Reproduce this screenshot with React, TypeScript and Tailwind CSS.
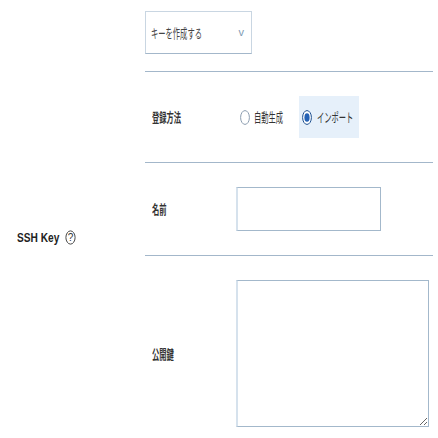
import React from "react";

const FONT = { fontFamily: '"Liberation Sans", "Noto Sans CJK JP", sans-serif' };

function Sq({ w, className, children }: { w: string; className?: string; children: React.ReactNode }) {
  return (
    <span className={`inline-block overflow-visible whitespace-nowrap ${w}`}>
      <span className={`inline-block origin-left scale-x-[0.56] whitespace-nowrap text-[13px] leading-[16px] ${className ?? ""}`}>
        {children}
      </span>
    </span>
  );
}

function Radio({ checked }: { checked: boolean }) {
  return (
    <svg width="10" height="15" viewBox="0 0 10 15" className="shrink-0">
      <ellipse cx="5" cy="7.5" rx="4.4" ry="6.9" fill="#fff" stroke={checked ? "#1c4f8f" : "#8c9db0"} strokeWidth="1" />
      {checked && <ellipse cx="5" cy="7.5" rx="2.6" ry="4.3" fill="#2562b5" />}
    </svg>
  );
}

export default function App() {
  return (
    <div className="flex w-[438px] h-[474px] bg-white text-[#333]" style={FONT}>
      <div className="w-[145px] shrink-0 flex items-center pl-[17px]">
        <span className="inline-block w-[47px] whitespace-nowrap">
          <span className="inline-block origin-left scale-x-[0.78] text-[13px] font-bold leading-[14px] text-[#222]">SSH Key</span>
        </span>
        <svg width="11" height="15" viewBox="0 0 11 15" className="ml-[1px]">
          <ellipse cx="5.5" cy="7.5" rx="4.6" ry="6.6" fill="none" stroke="#333" strokeWidth="0.9" />
          <text x="5.5" y="11" textAnchor="middle" fontSize="10" fill="#333" fontFamily="Liberation Sans, sans-serif">?</text>
        </svg>
      </div>
      <div className="flex-1 pr-[5px] flex flex-col">
        <div className="h-[72px] border-b border-[#a3b7ca] pt-[11px]">
          <div className="w-[107px] h-[43px] border border-[#c9d6e2] border-b-[#a3b7ca] flex items-center pl-[5px] pr-[7px] justify-between">
            <Sq w="w-[50px]" className="text-[#444]">キーを作成する</Sq>
            <span className="text-[11px] text-[#7f9ab3] leading-none">v</span>
          </div>
        </div>
        <div className="h-[91px] border-b border-[#a3b7ca] flex items-center">
          <div className="w-[91px] pl-[7px]">
            <Sq w="w-[30px]" className="font-semibold text-[#333]">登録方法</Sq>
          </div>
          <div className="flex items-center pl-[4px]">
            <Radio checked={false} />
            <span className="ml-[4px]">
              <Sq w="w-[30px]" className="text-[#333]">自動生成</Sq>
            </span>
            <div className="ml-[15px] h-[42px] w-[60px] bg-[#e6f0fa] flex items-center pl-[3px]">
              <Radio checked={true} />
              <span className="ml-[5px]">
                <Sq w="w-[36px]" className="text-[#333]">インポート</Sq>
              </span>
            </div>
          </div>
        </div>
        <div className="h-[93px] border-b border-[#a3b7ca] flex items-center">
          <div className="w-[91px] pl-[7px]">
            <Sq w="w-[16px]" className="font-semibold text-[#333]">名前</Sq>
          </div>
          <input
            type="text"
            className="w-[145px] h-[44px] border border-[#a3b8cb] border-l-2 border-l-[#d6e2ed] outline-none bg-white"
          />
        </div>
        <div className="pt-[24px] flex items-center">
          <div className="w-[91px] pl-[7px]">
            <Sq w="w-[22px]" className="font-semibold text-[#333]">公開鍵</Sq>
          </div>
          <textarea className="w-[193px] h-[147px] border border-[#a3b8cb] border-l-2 border-l-[#d6e2ed] outline-none bg-white resize" />
        </div>
      </div>
    </div>
  );
}
